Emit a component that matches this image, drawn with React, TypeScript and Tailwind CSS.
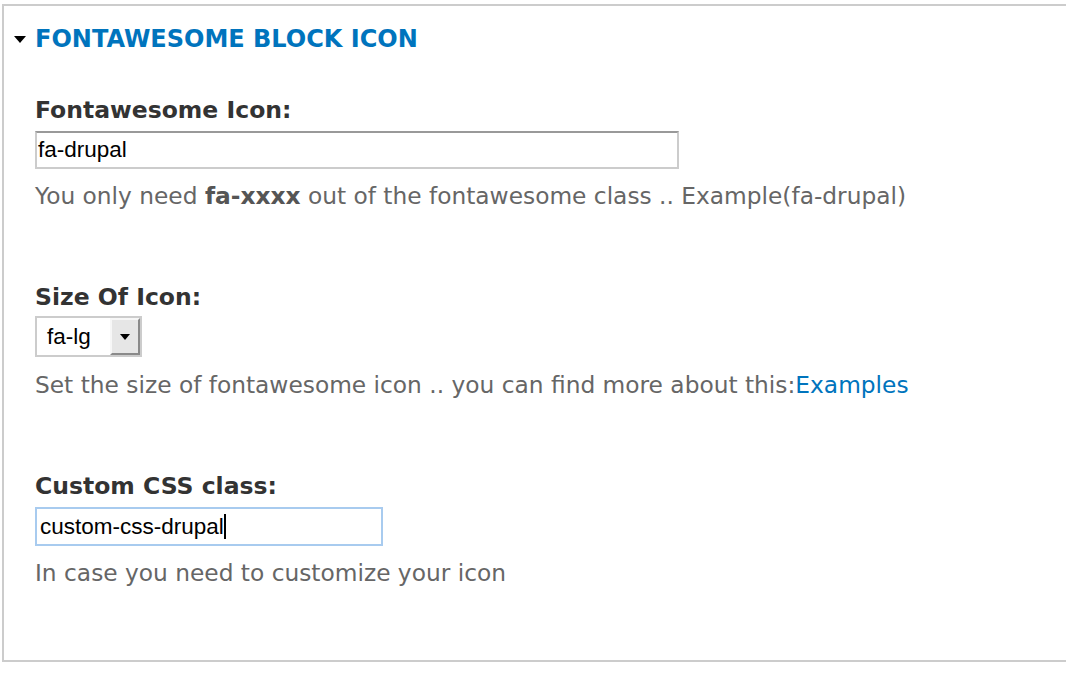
export default function App() {
  return (
    <div className="h-[678px] w-[1066px] overflow-hidden bg-white pt-[4px] pl-[2px] font-['DejaVu_Sans',sans-serif]">
      <fieldset className="h-[658px] border-t-2 border-l-2 border-b-2 border-[#cccccc] pl-[31px]">
        <div className="flex items-center h-[34px] mt-[16px] -ml-[21px]">
          <span className="w-0 h-0 border-l-[6px] border-r-[6px] border-t-[7px] border-l-transparent border-r-transparent border-t-black mr-[9px]" />
          <a className="text-[#0074bd] text-[24px] font-bold">FONTAWESOME BLOCK ICON</a>
        </div>

        <div className="mt-[39px]">
          <label className="block text-[#333333] text-[23.5px] font-bold leading-[30px]">Fontawesome Icon:</label>
          <div className="mt-[6px] w-[644px] h-[38px] border-2 border-[#cccccc] border-t-[#999999] flex items-center pl-[1px] font-['Liberation_Sans',sans-serif] text-[22.5px] text-black">
            fa-drupal
          </div>
          <p className="mt-[11px] text-[#666666] text-[23.3px] leading-[32px]">
            You only need <strong className="text-[#555555]">fa-xxxx</strong> out of the fontawesome class .. Example(fa-drupal)
          </p>
        </div>

        <div className="mt-[70px]">
          <label className="block text-[#333333] text-[23.5px] font-bold leading-[30px]">Size Of Icon:</label>
          <div className="mt-[4px] flex w-[107px] h-[41px] border-2 border-[#cccccc]">
            <div className="flex-1 flex items-center pl-[10px] font-['Liberation_Sans',sans-serif] text-[22.5px] text-black">fa-lg</div>
            <div className="w-[30px] bg-[#e6e6e6] flex items-center justify-center border-t-2 border-l-2 border-[#f7f7f7] border-b-2 border-r-2 border-b-[#8a8a8a] border-r-[#8a8a8a]">
              <span className="w-0 h-0 border-l-[5px] border-r-[5px] border-t-[6px] border-l-transparent border-r-transparent border-t-black" />
            </div>
          </div>
          <p className="mt-[12px] text-[#666666] text-[23.3px] leading-[32px]">
            Set the size of fontawesome icon .. you can find more about this:<a className="text-[#0074bd]">Examples</a>
          </p>
        </div>

        <div className="mt-[70px]">
          <label className="block text-[#333333] text-[23.5px] font-bold leading-[30px]">Custom CSS class:</label>
          <div className="mt-[6px] w-[348px] h-[39px] border-2 border-[#a8cbef] flex items-center pl-[3px] font-['Liberation_Sans',sans-serif] text-[22.5px] text-black">
            custom-css-drupal<span className="w-[2px] h-[25px] bg-black" />
          </div>
          <p className="mt-[11px] text-[#666666] text-[23.3px] leading-[32px]">In case you need to customize your icon</p>
        </div>
      </fieldset>
    </div>
  )
}
